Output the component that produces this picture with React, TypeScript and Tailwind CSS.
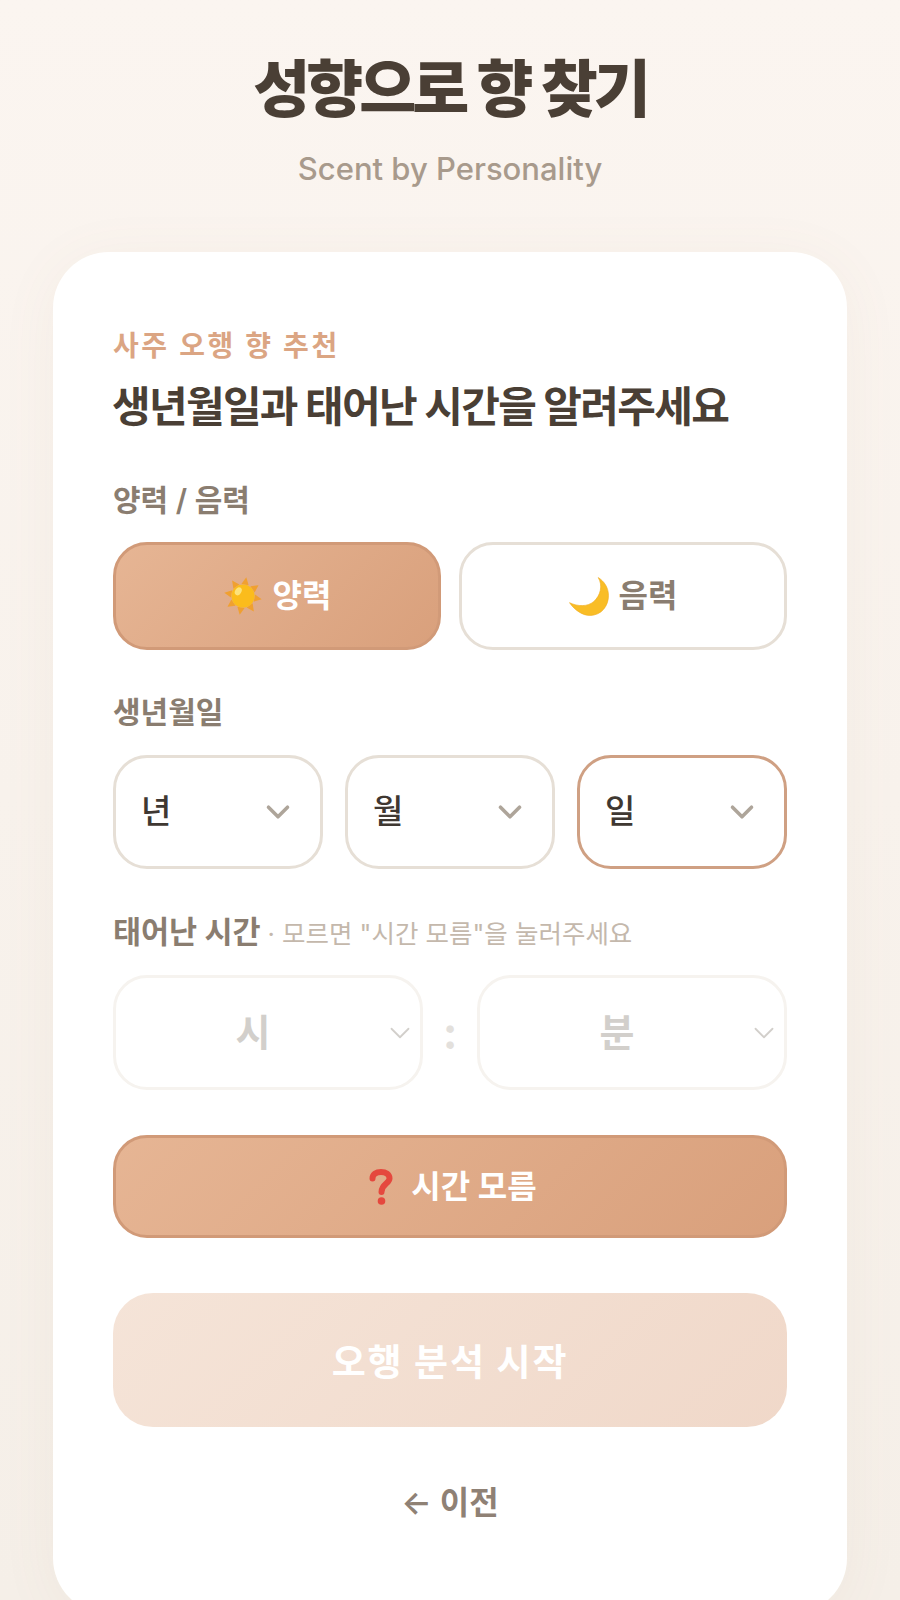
import { ChevronDown } from 'lucide-react';

const FONT = "font-['Inter','Noto_Sans_CJK_KR',sans-serif]";

function SunIcon() {
  const rays = [0, 45, 90, 135, 180, 225, 270, 315];
  return (
    <svg width="40" height="40" viewBox="0 0 38 38">
      {rays.map((deg) => (
        <polygon key={deg} points="15.500,8 19,1 22.500,8" fill="#f0a030" transform={`rotate(${deg + 10} 19 19)`} />
      ))}
      <circle cx="19" cy="19" r="11" fill="#fbbc1c" />
      <ellipse cx="14.5" cy="14.5" rx="3" ry="4" fill="#fde27a" transform="rotate(30 14.5 14.5)" />
    </svg>
  );
}

function MoonIcon() {
  return (
    <svg width="40" height="39" viewBox="0 0 39 38">
      <path d="M28.500 0.500C33 8 31 18 24 24C18 29 9 29 0.500 25C6 33 14 37.500 20 37.500C32 37.500 38.500 28 38.500 18C38.500 10 34 4 28.500 0.500Z" fill="#f9bd26" stroke="#f0ae20" strokeWidth="0.6" />
    </svg>
  );
}

function QuestionIcon() {
  return (
    <svg width="28" height="38" viewBox="0 0 28 38">
      <path d="M5.500 10.500C5.500 6.500 9 4 14 4C19 4 22.500 6.500 22.500 10.500C22.500 15.500 14.500 16 14.500 24" fill="none" stroke="#e5483e" strokeWidth="6" strokeLinecap="round" />
      <circle cx="14.500" cy="33" r="3.800" fill="#e5483e" />
    </svg>
  );
}

function SelectBox({ label, active }: { label: string; active?: boolean }) {
  return (
    <div
      className={`flex h-[114px] flex-1 items-center justify-between rounded-[34px] border-[3px] bg-white pl-[25px] pr-[23px] ${
        active ? 'border-[#cfa083]' : 'border-[#e6dfd6]'
      }`}
    >
      <span className="text-[33px] font-medium text-[#3f3832]">{label}</span>
      <ChevronDown className="h-[38px] w-[38px] text-[#aea59a]" strokeWidth={2.25} />
    </div>
  );
}

function TimeBox({ label }: { label: string }) {
  return (
    <div className="relative flex h-[115px] flex-1 items-center justify-center rounded-[34px] border-[3px] border-[#f6f3ef] bg-white pr-[30px]">
      <span className="text-[38px] font-bold text-[#d2cfcb]">{label}</span>
      <ChevronDown className="absolute right-[3px] h-[34px] w-[34px] text-[#d2cfcb]" strokeWidth={1.25} />
    </div>
  );
}

export default function App() {
  return (
    <div className={`h-[1600px] overflow-hidden bg-gradient-to-b from-[#fbf5f0] to-[#f5efe8] ${FONT}`}>
      <div className="flex flex-col items-center pt-[50px]">
        <h1 className="text-[62px] font-black leading-[80px] tracking-[-0.065em] text-[#4a3f35] [word-spacing:3px]">
          성향으로 향 찾기
        </h1>
        <p className="mt-[19px] text-[31px] font-medium leading-[40px] text-[#a89a8c]">Scent by Personality</p>
      </div>

      <div className="mx-[53px] mt-[63px] rounded-[56px] bg-white px-[60px] pb-[91px] pt-[74px] shadow-[0_8px_60px_rgba(160,120,90,0.06)]">
        <div className="text-[28px] font-semibold leading-[40px] tracking-[0.09em] text-[#dba583]">사주 오행 향 추천</div>
        <h2 className="-ml-[1px] mt-[13px] text-[42px] font-bold leading-[56px] tracking-[-0.04em] text-[#4a3f35]">
          생년월일과 태어난 시간을 알려주세요
        </h2>

        <div className="mt-[45px] text-[30px] font-semibold leading-[40px] text-[#8a7d70]">양력 / 음력</div>
        <div className="mt-[22px] flex gap-[18px]">
          <button className="flex h-[108px] flex-1 items-center justify-center gap-[10px] rounded-[34px] border-[3px] border-[#d19a78] bg-linear-135 from-[#e6b594] to-[#d9a07c] text-[32px] font-bold text-white">
            <SunIcon />
            양력
          </button>
          <button className="flex h-[108px] flex-1 items-center justify-center gap-[10px] rounded-[34px] border-[3px] border-[#e6dfd6] bg-white text-[32px] font-bold text-[#8a7d70]">
            <MoonIcon />
            음력
          </button>
        </div>

        <div className="mt-[42px] text-[30px] font-semibold leading-[40px] text-[#8a7d70]">생년월일</div>
        <div className="mt-[23px] flex gap-[22px]">
          <SelectBox label="년" />
          <SelectBox label="월" />
          <SelectBox label="일" active />
        </div>

        <div className="mt-[43px] flex items-baseline gap-[7px] leading-[40px]">
          <span className="text-[30.5px] font-bold text-[#8a7d70]">태어난 시간</span>
          <span className="text-[25.5px] text-[#c4b8ac]">· 모르면 "시간 모름"을 눌러주세요</span>
        </div>
        <div className="mt-[21px] flex items-center">
          <TimeBox label="시" />
          <span className="w-[54px] text-center text-[44px] font-bold text-[#e3e0dc]">:</span>
          <TimeBox label="분" />
        </div>

        <button className="mt-[45px] flex h-[103px] w-full items-center justify-center gap-[16px] rounded-[34px] border-[3px] border-[#d19a78] bg-linear-135 from-[#e6b594] to-[#d9a07c] pl-[4px] text-[32px] font-bold text-white">
          <QuestionIcon />
          시간 모름
        </button>

        <button className="mt-[55px] flex h-[134px] w-full items-center justify-center rounded-[40px] bg-linear-135 from-[#f5e4d8] to-[#f0d8c9] pt-[6px] text-[37px] font-bold tracking-[0.05em] text-white">
          오행 분석 시작
        </button>

        <div className="mt-[56px] text-center text-[32px] font-semibold leading-[40px] text-[#8f8175]">← 이전</div>
      </div>
    </div>
  );
}
